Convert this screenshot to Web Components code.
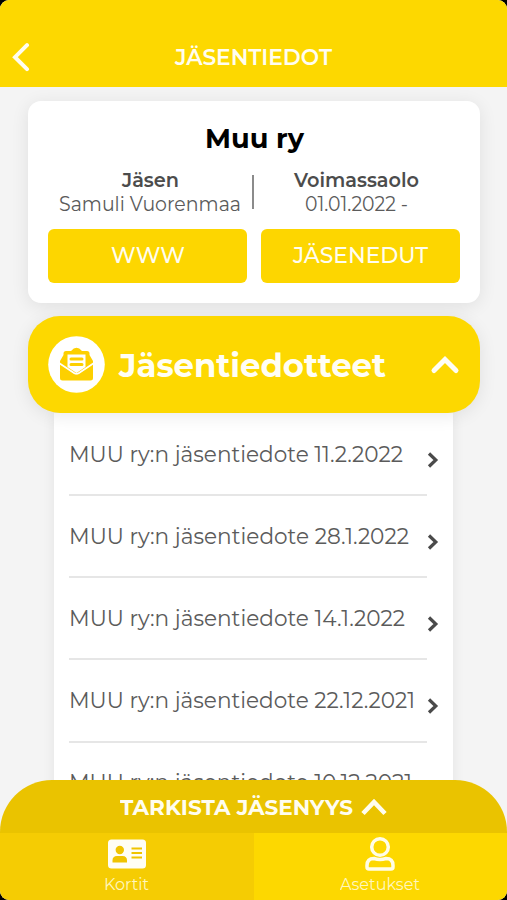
<!DOCTYPE html>
<html lang="fi">
<head>
<meta charset="utf-8">
<title>Jäsentiedot</title>
<style>
html,body{margin:0;height:100%;background:#000;overflow:hidden}
body{font-family:Montserrat,Inter,"Open Sans",sans-serif;color:#5b5b5b}
</style>
</head>
<body>
<member-app></member-app>
<script>
const define = (name, html, ready) => customElements.define(name, class extends HTMLElement {
  connectedCallback() {
    if (this.shadowRoot) return;
    this.attachShadow({mode: 'open'}).innerHTML = html;
    if (ready) ready(this, this.shadowRoot);
  }
});

// One line of text stretched to the width given in the "w" attribute; its height equals the font size.
define('fit-text', `<style>
:host{display:block;flex:none;line-height:1;white-space:nowrap}
span{display:inline-block;transform-origin:0 0;vertical-align:top}
</style><span><slot></slot></span>`, (el, root) => {
  const [w, size, weight] = ['w', 'size', 'weight'].map(a => +el.getAttribute(a));
  el.style.cssText = `width:${w}px;height:${size}px;font-size:${size}px;font-weight:${weight || 400}`;
  const s = root.querySelector('span');
  s.style.transform = `scaleX(${w / s.getBoundingClientRect().width})`;
});

define('app-header', `<style>
:host{display:grid;grid-template-columns:54px 1fr 54px;height:87px;flex:none;background:#fdd800;color:#fffdf0;box-sizing:border-box;padding-top:42px;align-items:start}
svg{display:block;margin-left:11px}
fit-text{margin:5px auto 0}
</style>
<svg width="20" height="30" viewBox="0 0 20 30"><path d="M16 3.200 4 15.200 16 27.200" fill="none" stroke="#fffdf0" stroke-width="4" stroke-linecap="round"/></svg>
<fit-text w="157" size="22" weight="650"><slot></slot></fit-text>`);

define('yellow-button', `<style>
:host{display:flex;justify-content:center;height:54px;border-radius:6px;background:#fdd600;color:#fffdf0;box-sizing:border-box;padding-top:16.200px}
</style><slot></slot>`);

define('info-field', `<style>
:host{display:flex;flex-direction:column;align-items:center;gap:3.500px}
::slotted([slot=label]){color:#4c4c4c}
</style><slot name="label"></slot><slot></slot>`);

define('member-card', `<style>
:host{display:block;box-sizing:border-box;height:202px;flex:none;margin:0 27px 0 28px;padding:23px 20px 0;background:#fff;border-radius:13px;box-shadow:0 3px 18px rgba(0,0,0,.085)}
.name{margin:0 auto;color:#000}
.info{display:grid;grid-template-columns:204px 2px 205px;margin-top:18px}
.line{height:34px;background:#8b8b8b;margin-top:5px}
.buttons{display:grid;grid-template-columns:1fr 1fr;gap:14px;margin-top:15.500px}
</style>
<fit-text class="name" w="99" size="28" weight="700">Muu ry</fit-text>
<div class="info">
<info-field><fit-text slot="label" w="57" size="20" weight="650">Jäsen</fit-text><fit-text w="182" size="20">Samuli Vuorenmaa</fit-text></info-field>
<div class="line"></div>
<info-field><fit-text slot="label" w="125" size="20" weight="650">Voimassaolo</fit-text><fit-text w="103" size="20">01.01.2022 -</fit-text></info-field>
</div>
<div class="buttons">
<yellow-button><fit-text w="74" size="22" weight="550">WWW</fit-text></yellow-button>
<yellow-button><fit-text w="135" size="22" weight="550">JÄSENEDUT</fit-text></yellow-button>
</div>`);

define('section-header', `<style>
:host{display:flex;align-items:center;box-sizing:border-box;height:97px;flex:none;margin:13px 27px 0 28px;padding:0 20px;background:#fdd800;border-radius:32px;box-shadow:0 3px 18px rgba(0,0,0,.085);color:#fffef4;position:relative;z-index:1}
.icon{flex:none}
fit-text{margin-left:14px;padding-top:2px}
.up{margin-left:auto}
</style>
<svg class="icon" width="57" height="57" viewBox="0 0 57 57">
<circle cx="28.500" cy="28.500" r="28.300" fill="#fff"/>
<path d="M12 25 15.500 19V17.500Q15.500 15 18 15H23Q28.500 8.500 34 15H39Q41.500 15 41.500 17.500V19L45 25V28L28.500 38 12 28Z" fill="#fdd000"/>
<path d="M19.500 18.500H37.500V31L28.500 37 19.500 31Z" fill="#fff"/>
<path d="M23 23h11M23 28.500h11" stroke="#fdd000" stroke-width="3" stroke-linecap="round"/>
<path d="M12 28 26 37.500Q28.500 39 31 37.500L45 28V42Q45 44.500 42.500 44.500H14.500Q12 44.500 12 42Z" fill="#fdd000"/>
<path d="M11 27 26 37Q28.500 38.500 31 37L46 27" fill="none" stroke="#fff" stroke-width="1.600"/>
</svg>
<fit-text w="267" size="32" weight="700">Jäsentiedotteet</fit-text>
<svg class="up" width="30" height="22" viewBox="0 0 30 22"><path d="M4 16.500 15 5.500 26 16.500" fill="none" stroke="#fffef4" stroke-width="5" stroke-linecap="round"/></svg>`);

define('bulletin-item', `<style>
:host{display:flex;align-items:flex-start;height:82.200px;box-sizing:border-box}
.row{width:358px;height:100%;box-sizing:border-box;padding-top:29.800px;border-bottom:2px solid #e6e6e6}
svg{flex:none;margin-top:36px}
</style>
<div class="row"><slot></slot></div>
<svg width="12" height="20" viewBox="0 0 12 20"><path d="M2 3.500 8.800 10 2 16.500" fill="none" stroke="#4a4a4a" stroke-width="3.200"/></svg>`);

define('bulletin-list', `<style>
:host{display:block;box-sizing:border-box;flex:none;height:420px;overflow:hidden;margin:0 54px;padding:.8px 0 0 14.500px;background:#fff;box-shadow:0 0 12px rgba(0,0,0,.07)}
</style><slot></slot>`);

define('check-bar', `<style>
:host{display:block;height:53px;flex:none;color:#fffdf0}
div{height:100%;box-sizing:border-box;background:#eac300;border-radius:52px 52px 0 0;display:flex;justify-content:center;align-items:flex-start;padding:17px 0 0}
svg{margin:0 0 0 7px}
</style>
<div><fit-text w="233" size="22" weight="700">TARKISTA JÄSENYYS</fit-text>
<svg width="28" height="20" viewBox="0 0 28 20"><path d="M3 16.500 14 5 25 16.500" fill="none" stroke="#fffdf0" stroke-width="4.600"/></svg></div>`);

define('nav-tab', `<style>
:host{display:flex;flex-direction:column;align-items:center;background:#fdd800;color:#fff6bd;box-sizing:border-box;padding-top:3px}
:host([active]){background:#f5cc03}
.icon{height:40.500px}
</style><div class="icon"><slot name="icon"></slot></div><slot></slot>`);

define('tab-bar', `<style>
:host{display:grid;grid-template-columns:1fr 1fr;height:67px;flex:none}
svg{display:block}
</style>
<nav-tab active><svg slot="icon" width="40" height="36" viewBox="0 0 40 36">
<rect x="1" y="3.500" width="38" height="29" rx="3.500" fill="#fffef5"/>
<circle cx="12.800" cy="14" r="4.200" fill="#f0c400"/><path d="M5.500 26.500V24.500Q5.500 20 10 20H15.500Q20 20 20 24.500V26.500Z" fill="#f0c400"/>
<path d="M24.500 12.500h10.500M24.500 17h10.500M24.500 21.500h10.500" stroke="#f0c400" stroke-width="2"/></svg>
<fit-text w="45" size="16">Kortit</fit-text></nav-tab>
<nav-tab><svg slot="icon" width="32" height="36" viewBox="0 0 32 36"><g fill="none" stroke="#fffde8" stroke-width="3.500">
<circle cx="16" cy="11" r="8.300"/><path d="M3 31V29.500Q3 22.500 10 22.500Q16 24.500 22 22.500Q29 22.500 29 29.500V31Q29 33 27 33H5Q3 33 3 31Z"/></g></svg>
<fit-text w="80" size="16">Asetukset</fit-text></nav-tab>`);

define('member-app', `<style>
:host{display:flex;flex-direction:column;width:507px;height:900px;overflow:hidden;background:#f4f4f4;border-radius:9px}
app-header{margin-bottom:14px}
check-bar,tab-bar{position:relative;z-index:2}
check-bar{margin-top:-53px}
</style>
<app-header>JÄSENTIEDOT</app-header>
<member-card></member-card>
<section-header></section-header>
<bulletin-list>
<bulletin-item><fit-text w="334" size="22">MUU ry:n jäsentiedote 11.2.2022</fit-text></bulletin-item>
<bulletin-item><fit-text w="340" size="22">MUU ry:n jäsentiedote 28.1.2022</fit-text></bulletin-item>
<bulletin-item><fit-text w="336" size="22">MUU ry:n jäsentiedote 14.1.2022</fit-text></bulletin-item>
<bulletin-item><fit-text w="346" size="22">MUU ry:n jäsentiedote 22.12.2021</fit-text></bulletin-item>
<bulletin-item><fit-text w="343" size="22">MUU ry:n jäsentiedote 10.12.2021</fit-text></bulletin-item>
</bulletin-list>
<check-bar></check-bar>
<tab-bar></tab-bar>`);
</script>
</body>
</html>
